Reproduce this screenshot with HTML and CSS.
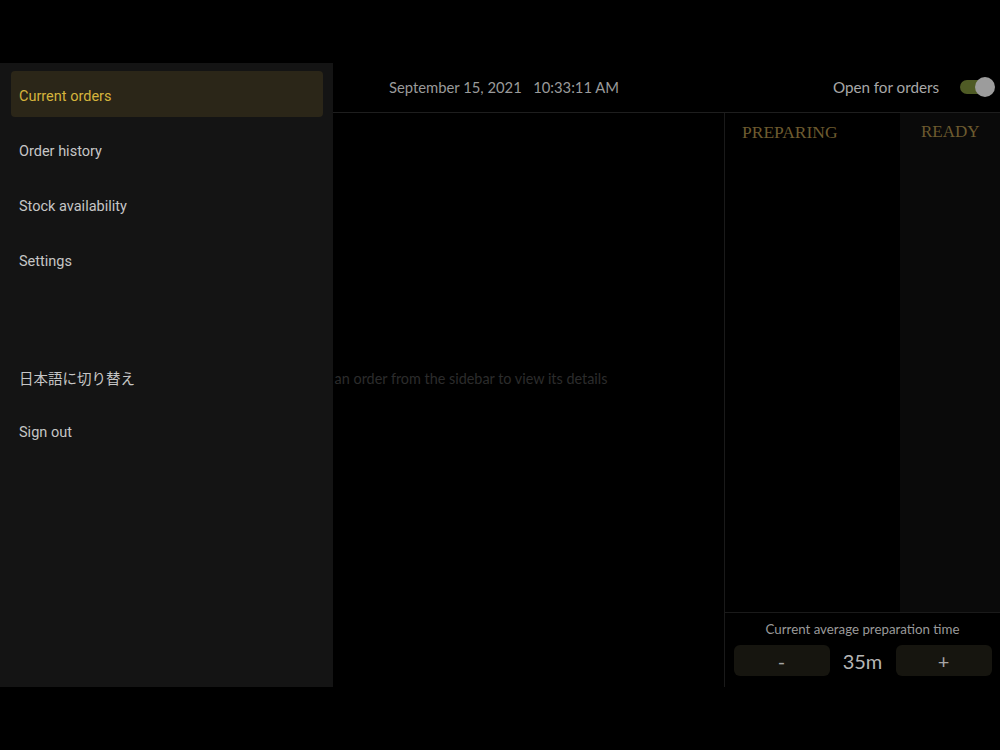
FILE: index.html
```html
<!DOCTYPE html>
<html>
<head>
    <title>Orders</title>
    <link rel="stylesheet" href="styles.css">
</head>
<body>
    <div class="app">
        <div class="topbar">
            <div class="topbar-side"></div>
            <div class="clock">September 15, 2021&nbsp;&nbsp;&nbsp;10:33:11 AM</div>
            <div class="topbar-side open-toggle">
                <span>Open for orders</span>
                <span class="switch"><span class="knob"></span></span>
            </div>
        </div>
        <div class="content">
            <div class="details">
                <div class="empty">Select an order from the sidebar to view its details</div>
            </div>
            <div class="board">
                <div class="columns">
                    <div class="column">PREPARING</div>
                    <div class="column ready">READY</div>
                </div>
                <div class="prep">
                    <div class="prep-label">Current average preparation time</div>
                    <div class="prep-controls">
                        <button class="prep-btn">-</button>
                        <span class="prep-value">35m</span>
                        <button class="prep-btn">+</button>
                    </div>
                </div>
            </div>
        </div>

        <!-- drawer, open -->
        <div class="drawer">
            <div class="nav-item active">Current orders</div>
            <div class="nav-item">Order history</div>
            <div class="nav-item">Stock availability</div>
            <div class="nav-item">Settings</div>
            <div class="nav-gap"></div>
            <div class="nav-item">日本語に切り替え</div>
            <div class="nav-item">Sign out</div>
        </div>
    </div>
</body>
</html>
```

FILE: styles.css
```css
body {
    margin: 0;
    background-color: #000;
}
.app {
    position: relative;
    margin-top: 63px;
    height: 624px;
    display: flex;
    flex-direction: column;
    font-family: Lato, "Noto Sans", sans-serif;
}
.topbar {
    height: 49px;
    border-bottom: 1px solid #1e1e1e;
    display: grid;
    grid-template-columns: 1fr auto 1fr;
    align-items: center;
}
.clock {
    color: #9a9a9a;
    font-size: 14.8px;
    padding-left: 8px;
    margin-top: -2px;
}
.open-toggle {
    display: flex;
    justify-content: flex-end;
    align-items: center;
    gap: 21px;
    padding-right: 10px;
    margin-top: -2px;
    color: #a8a8a8;
    font-size: 15.2px;
}
.switch {
    position: relative;
    width: 30px;
    height: 14px;
    border-radius: 7px;
    background-color: #4f5b25;
}
.knob {
    position: absolute;
    top: -3px;
    right: -5px;
    width: 20px;
    height: 20px;
    border-radius: 50%;
    background-color: #9c9c9c;
}
.content {
    flex: 1;
    display: flex;
}
.details {
    flex: 1;
    display: flex;
    align-items: center;
    justify-content: center;
    padding-left: 176px;
    padding-bottom: 44px;
}
.empty {
    color: #2c2c2c;
    font-size: 14.4px;
}
.board {
    width: 275px;
    border-left: 1px solid #1a1a1a;
    display: flex;
    flex-direction: column;
}
.columns {
    flex: 1;
    display: flex;
}
.column {
    width: 175px;
    padding: 9px 0 0 17px;
    box-sizing: border-box;
    font-family: "Liberation Serif", serif;
    font-size: 17.5px;
    color: #6d5b2f;
}
.column.ready {
    flex: 1;
    width: auto;
    padding-left: 21px;
    font-size: 17px;
    background-color: #0a0a0a;
}
.prep {
    height: 74px;
    border-top: 1px solid #1a1a1a;
    display: flex;
    flex-direction: column;
    align-items: center;
}
.prep-label {
    margin-top: 8px;
    color: #9a9a9a;
    font-size: 13.3px;
}
.prep-controls {
    margin-top: 8px;
    display: flex;
    align-items: center;
    gap: 12px;
}
.prep-btn {
    width: 96px;
    height: 31px;
    border: none;
    border-radius: 6px;
    background-color: #16150f;
    color: #a5a5a5;
    font-family: Lato, sans-serif;
    font-size: 20px;
}
.prep-value {
    width: 42px;
    text-align: center;
    color: #b5b5b5;
    font-size: 20px;
}
.drawer {
    position: absolute;
    top: 0;
    left: 0;
    width: 333px;
    height: 624px;
    box-sizing: border-box;
    padding: 8px 10px 0 11px;
    background-color: #141414;
    font-family: Roboto, "Noto Sans CJK JP", sans-serif;
}
.nav-item {
    height: 46px;
    margin-bottom: 9px;
    padding: 4px 0 0 8px;
    box-sizing: border-box;
    border-radius: 4px;
    display: flex;
    align-items: center;
    color: #c6c6c6;
    font-size: 14.5px;
}
.nav-item.active {
    background-color: #2b2618;
    color: #d5b43c;
}
.nav-gap {
    height: 61px;
}
```
